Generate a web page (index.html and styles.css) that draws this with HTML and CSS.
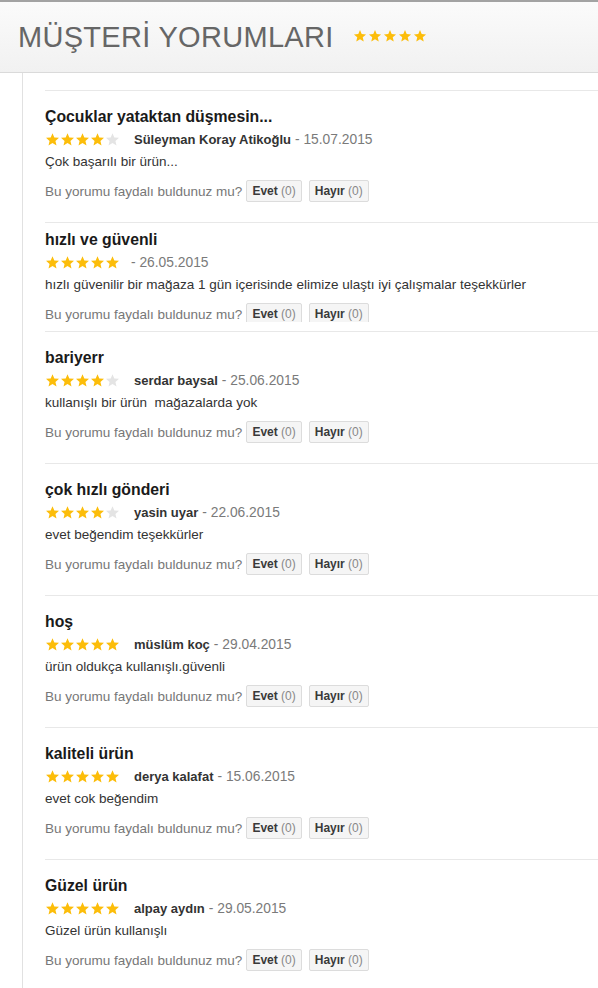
FILE: index.html
```html
<!DOCTYPE html>
<html lang="tr">
<head>
  <meta charset="UTF-8" />
  <meta name="viewport" content="width=device-width, initial-scale=1" />
  <title>Müşteri Yorumları</title>
  <link rel="stylesheet" href="styles.css">
</head>
<body>
  <svg width="0" height="0" style="position:absolute">
    <symbol id="star" viewBox="0 0 24 24">
      <path d="M12 17.6l6.4 3.9-1.7-7.3 5.7-4.9-7.5-.6L12 1.8 9.1 8.7l-7.5.6 5.7 4.9-1.7 7.3z" />
    </symbol>
  </svg>

  <div class="header">
    <h1 class="header-title">MÜŞTERİ YORUMLARI</h1>
    <div class="header-stars">
      <svg><use href="#star" /></svg>
      <svg><use href="#star" /></svg>
      <svg><use href="#star" /></svg>
      <svg><use href="#star" /></svg>
      <svg><use href="#star" /></svg>
    </div>
  </div>

  <div class="content">
    <div class="review">
      <div class="review-body">
        <div class="review-title">Çocuklar yataktan düşmesin...</div>
        <div class="review-meta">
          <span class="stars" data-rate="4"></span>
          <span class="name">Süleyman Koray Atikoğlu</span>
          <span class="date">- 15.07.2015</span>
        </div>
        <div class="review-text">Çok başarılı bir ürün...</div>
        <div class="helpful">
          Bu yorumu faydalı buldunuz mu?
          <button class="vote"><b>Evet</b> (0)</button>
          <button class="vote"><b>Hayır</b> (0)</button>
        </div>
      </div>
    </div>

    <div class="review clipped">
      <div class="review-body">
        <div class="review-title">hızlı ve güvenli</div>
        <div class="review-meta">
          <span class="stars" data-rate="5"></span>
          <span class="date">- 26.05.2015</span>
        </div>
        <div class="review-text">hızlı güvenilir bir mağaza 1 gün içerisinde elimize ulaştı iyi çalışmalar teşekkürler</div>
        <div class="helpful">
          Bu yorumu faydalı buldunuz mu?
          <button class="vote"><b>Evet</b> (0)</button>
          <button class="vote"><b>Hayır</b> (0)</button>
        </div>
      </div>
    </div>

    <div class="review">
      <div class="review-body">
        <div class="review-title">bariyerr</div>
        <div class="review-meta">
          <span class="stars" data-rate="4"></span>
          <span class="name">serdar baysal</span>
          <span class="date">- 25.06.2015</span>
        </div>
        <div class="review-text">kullanışlı bir ürün&nbsp; mağazalarda yok</div>
        <div class="helpful">
          Bu yorumu faydalı buldunuz mu?
          <button class="vote"><b>Evet</b> (0)</button>
          <button class="vote"><b>Hayır</b> (0)</button>
        </div>
      </div>
    </div>

    <div class="review">
      <div class="review-body">
        <div class="review-title">çok hızlı gönderi</div>
        <div class="review-meta">
          <span class="stars" data-rate="4"></span>
          <span class="name">yasin uyar</span>
          <span class="date">- 22.06.2015</span>
        </div>
        <div class="review-text">evet beğendim teşekkürler</div>
        <div class="helpful">
          Bu yorumu faydalı buldunuz mu?
          <button class="vote"><b>Evet</b> (0)</button>
          <button class="vote"><b>Hayır</b> (0)</button>
        </div>
      </div>
    </div>

    <div class="review">
      <div class="review-body">
        <div class="review-title">hoş</div>
        <div class="review-meta">
          <span class="stars" data-rate="5"></span>
          <span class="name">müslüm koç</span>
          <span class="date">- 29.04.2015</span>
        </div>
        <div class="review-text">ürün oldukça kullanışlı.güvenli</div>
        <div class="helpful">
          Bu yorumu faydalı buldunuz mu?
          <button class="vote"><b>Evet</b> (0)</button>
          <button class="vote"><b>Hayır</b> (0)</button>
        </div>
      </div>
    </div>

    <div class="review">
      <div class="review-body">
        <div class="review-title">kaliteli ürün</div>
        <div class="review-meta">
          <span class="stars" data-rate="5"></span>
          <span class="name">derya kalafat</span>
          <span class="date">- 15.06.2015</span>
        </div>
        <div class="review-text">evet cok beğendim</div>
        <div class="helpful">
          Bu yorumu faydalı buldunuz mu?
          <button class="vote"><b>Evet</b> (0)</button>
          <button class="vote"><b>Hayır</b> (0)</button>
        </div>
      </div>
    </div>

    <div class="review">
      <div class="review-body">
        <div class="review-title">Güzel ürün</div>
        <div class="review-meta">
          <span class="stars" data-rate="5"></span>
          <span class="name">alpay aydın</span>
          <span class="date">- 29.05.2015</span>
        </div>
        <div class="review-text">Güzel ürün kullanışlı</div>
        <div class="helpful">
          Bu yorumu faydalı buldunuz mu?
          <button class="vote"><b>Evet</b> (0)</button>
          <button class="vote"><b>Hayır</b> (0)</button>
        </div>
      </div>
    </div>
  </div>

  <script>
    // fill the rating stars
    document.querySelectorAll('.stars').forEach(el => {
      const rate = Number(el.dataset.rate);
      let html = '';
      for (let i = 0; i < 5; i++) {
        html += '<svg class="' + (i < rate ? 'on' : 'off') + '"><use href="#star" /></svg>';
      }
      el.innerHTML = html;
    });
  </script>
</body>
</html>
```

FILE: styles.css
```css
body {
  margin: 0;
  font-family: "Liberation Sans", Arial, sans-serif;
  background: #fff;
  color: #333;
}
.header {
  display: flex;
  align-items: center;
  height: 70px;
  padding-left: 18px;
  border-top: 2px solid #a3a3a3;
  border-bottom: 1px solid #dadada;
  background: linear-gradient(#fbfbfb, #f1f1f1);
}
.header-title {
  margin: 0;
  font-size: 29px;
  font-weight: normal;
  color: #666;
  letter-spacing: 0.3px;
}
.header-stars {
  display: flex;
  gap: 1px;
  margin-left: 19px;
  margin-top: -2px;
}
.header-stars svg {
  width: 14px;
  height: 14px;
  fill: #fcbd0a;
}
.content {
  margin-left: 22px;
  border-left: 1px solid #e1e1e1;
  padding: 17px 0 0 22px;
}
.review {
  border-top: 1px solid #e8e8e8;
  padding: 16px 0 20px;
}
.review.clipped {
  padding: 7px 0 9px;
}
.review.clipped .review-body {
  height: 92px;
  overflow: hidden;
}
.review-title {
  font-size: 15.8px;
  font-weight: bold;
  line-height: 20px;
  color: #1a1a1a;
}
.review-meta {
  display: flex;
  align-items: center;
  height: 18px;
  margin-top: 3px;
  font-size: 13.5px;
}
.stars {
  display: flex;
  margin-right: 11px;
}
.stars svg {
  width: 15px;
  height: 15px;
}
.stars .on {
  fill: #fcbd0a;
}
.stars .off {
  fill: #e4e4e4;
}
.name {
  margin-left: 3px;
  margin-right: 4px;
  font-weight: bold;
  font-size: 13px;
  color: #333;
}
.date {
  font-size: 13.8px;
  color: #7a7a7a;
}
.review-text {
  margin-top: 5px;
  font-size: 13.5px;
  line-height: 18px;
  color: #333;
}
.helpful {
  display: flex;
  align-items: center;
  height: 22px;
  margin-top: 9px;
  font-size: 13.5px;
  color: #777;
}
.vote {
  height: 22px;
  margin-left: 4px;
  padding: 0 5px;
  border: 1px solid #dcdcdc;
  border-radius: 2px;
  background: #f5f5f5;
  font-family: inherit;
  font-size: 12px;
  color: #888;
}
.vote + .vote {
  margin-left: 7px;
}
.vote b {
  color: #3a3a3a;
}
```
